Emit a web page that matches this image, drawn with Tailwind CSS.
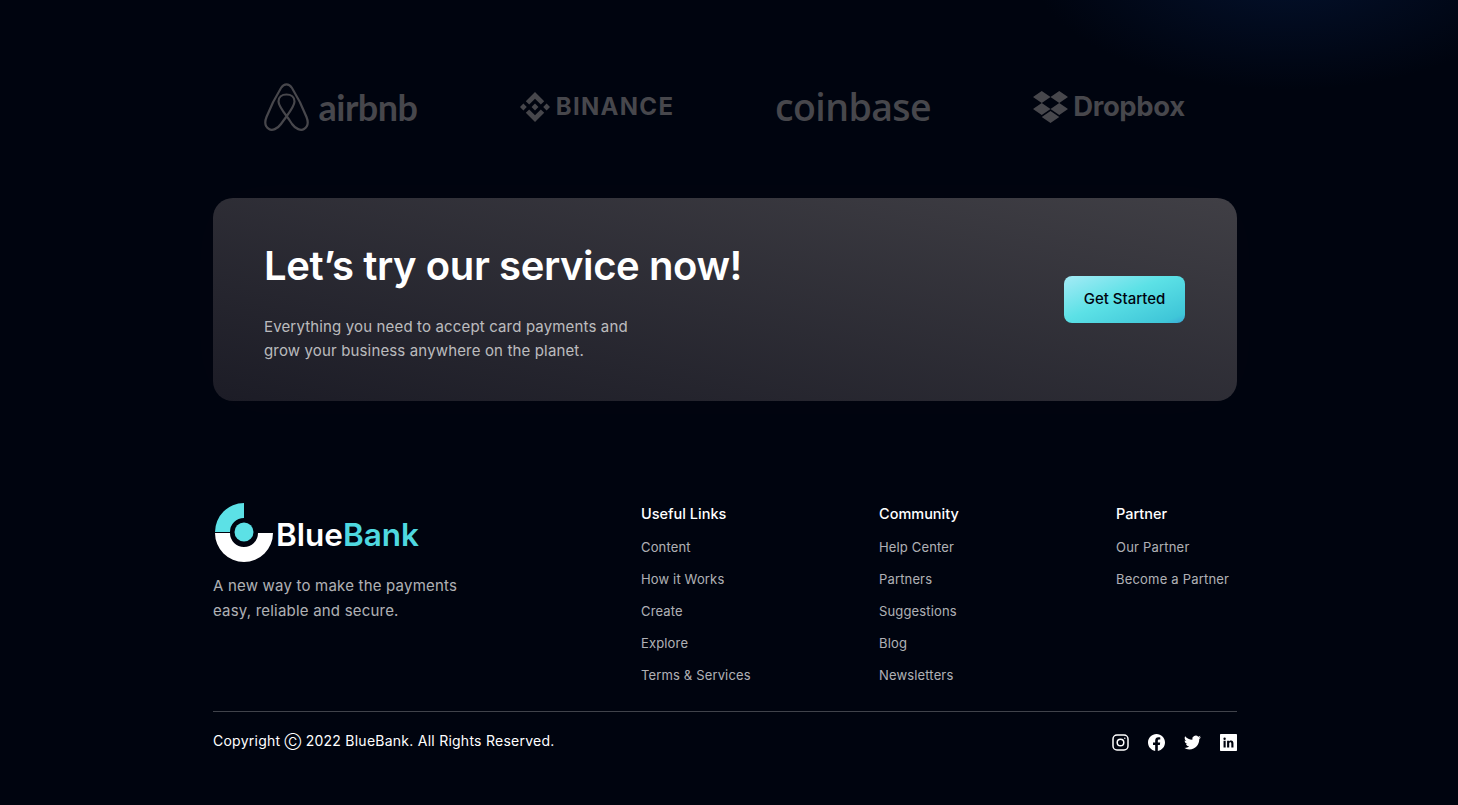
<!DOCTYPE html>
<html>
<head>
<meta charset="utf-8">
<script src="https://cdn.jsdelivr.net/npm/@tailwindcss/browser@4"></script>
</head>
<body class="bg-[#00040f] font-['Inter','Liberation_Sans',sans-serif] text-white">
<div class="relative w-[1458px] h-[805px] overflow-hidden bg-[#00040f]">
  <div class="absolute -top-[170px] right-[-90px] w-[520px] h-[260px] rounded-full bg-[radial-gradient(closest-side,#04122e,transparent)]"></div>
  <main class="relative w-[1024px] ml-[213px]">
    <section class="grid grid-cols-4 h-[198px] items-center pt-[16px] text-[#47474c]">
      <div class="flex justify-center items-center gap-[9px]">
        <svg class="w-[45px] h-[49px]" viewBox="0 0 45 49" fill="none" stroke="#47474c" stroke-width="2.2" stroke-linejoin="round"><path d="M22.5 33C18 27 14.5 22 14.5 18.5C14.5 14 18 11.5 22.5 11.5C27 11.5 30.5 14 30.5 18.5C30.5 24 24 31 17 41C13.500 46 8 48 5 46C1 43.500 0.500 39 2.500 34C6 25 12 13 17 5C19 2 21 1.300 22.500 1.300C24 1.300 26 2 28 5C33 13 39 25 42.500 34C44.500 39 44 43.500 40 46C37 48 31.500 46 28 41C26 38 24.500 35.500 22.500 33Z"/></svg>
        <span class="font-['Lato'] font-bold text-[36px] leading-none tracking-[-0.5px]">airbnb</span>
      </div>
      <div class="flex justify-center items-center gap-[6px]">
        <svg class="w-[30px] h-[30px]" viewBox="0 0 126.61 126.61" fill="#47474c"><path d="M38.73 53.2l24.59-24.58 24.6 24.6 14.3-14.31L63.32 0 24.43 38.9zM0 63.31l14.3-14.31 14.31 14.31-14.31 14.3zM38.73 73.41l24.59 24.59 24.6-24.6 14.31 14.29-38.9 38.91-38.91-38.88zM98 63.31l14.3-14.3 14.31 14.3-14.31 14.31zM77.83 63.3L63.32 48.78 52.59 59.51l-1.24 1.23-2.54 2.54 14.51 14.52 14.51-14.5z"/></svg>
        <span class="font-['Inter'] font-bold text-[24px] leading-none tracking-[1.3px]">BINANCE</span>
      </div>
      <div class="flex justify-center items-center">
        <span class="font-['Open_Sans'] font-semibold text-[37.500px] leading-none tracking-[-0.6px]">coinbase</span>
      </div>
      <div class="flex justify-center items-center gap-[5px]">
        <svg class="w-[35px] h-[32px]" viewBox="0 1.800 24 20.400" preserveAspectRatio="none" fill="#47474c"><path d="M6 1.807L0 5.629l6 3.822 6.001-3.822L6 1.807zM18 1.807l-6 3.822 6 3.822 6-3.822-6-3.822zM0 13.274l6 3.822 6.001-3.822L6 9.452l-6 3.822zM18 9.452l-6 3.822 6 3.822 6-3.822-6-3.822zM6 18.371l6.001 3.822 6-3.822-6-3.822L6 18.371z"/></svg>
        <span class="font-['Inter'] font-bold text-[27.500px] leading-none tracking-[-0.4px]">Dropbox</span>
      </div>
    </section>

    <section class="h-[203px] rounded-[20px] bg-gradient-to-tr from-[#1c1c26] to-[#403f45] pl-[51px] pr-[52px] flex items-center justify-between shadow-[0_0_60px_rgba(255,255,255,0.012)]">
      <div class="pt-[10px]">
        <h2 class="font-semibold text-[40px] leading-[46px] tracking-[-0.4px] -mt-[4px]">Let’s try our service now!</h2>
        <p class="mt-[26px] text-[15px] leading-[24px] tracking-[0.15px] text-white/70 w-[420px]">Everything you need to accept card payments and<br>grow your business anywhere on the planet.</p>
      </div>
      <button class="w-[121px] h-[47px] rounded-[8px] bg-[linear-gradient(157deg,#a5ebf6_0%,#5ce1e6_45%,#3fc6d8_90%,#3aa8d8_100%)] text-[#00040f] font-medium text-[15px]">Get Started</button>
    </section>

    <footer class="pt-[101px]">
      <div class="flex h-[210px] border-b border-white/25">
        <div class="w-[428px]">
          <div class="flex items-center gap-[2px] h-[60px]">
            <svg class="w-[60px] h-[60px] ml-[1px]" viewBox="0 0 60 60">
              <path d="M30 1A29 29 0 0 0 1 30H16A14 14 0 0 1 30 16Z" fill="#5ce1e6"/>
              <path d="M1 30A29 29 0 0 0 59 30H44A14 14 0 0 1 16 30Z" fill="#fff" transform="translate(0 1)"/>
              <circle cx="30" cy="30" r="9.500" fill="#5ce1e6"/>
            </svg>
            <span class="pt-[6px] font-semibold text-[31.500px] leading-none">Blue<span class="text-[#4fd8e0]">Bank</span></span>
          </div>
          <p class="mt-[11px] text-[15px] leading-[25px] tracking-[0.2px] text-white/70">A new way to make the payments<br>easy, reliable and secure.</p>
        </div>
        <div class="w-[238px]">
          <h4 class="font-medium text-[14.500px] leading-[24px]">Useful Links</h4>
          <ul class="mt-[11px] text-[13px] tracking-[0.15px] text-white/70 leading-[20px] space-y-[12px]"><li>Content</li><li>How it Works</li><li>Create</li><li>Explore</li><li>Terms &amp; Services</li></ul>
        </div>
        <div class="w-[237px]">
          <h4 class="font-medium text-[14.500px] leading-[24px]">Community</h4>
          <ul class="mt-[11px] text-[13px] tracking-[0.15px] text-white/70 leading-[20px] space-y-[12px]"><li>Help Center</li><li>Partners</li><li>Suggestions</li><li>Blog</li><li>Newsletters</li></ul>
        </div>
        <div class="flex-1">
          <h4 class="font-medium text-[14.500px] leading-[24px]">Partner</h4>
          <ul class="mt-[11px] text-[13px] tracking-[0.2px] text-white/70 leading-[20px] space-y-[12px]"><li>Our Partner</li><li>Become a Partner</li></ul>
        </div>
      </div>
      <div class="flex items-center justify-between h-[56px]">
        <p class="text-[14px] tracking-[0.25px]">Copyright <span class="text-[12px]">Ⓒ</span> 2022 BlueBank. All Rights Reserved.</p>
        <div class="flex items-center gap-[19px] mt-[4px]">
          <svg class="w-[17px] h-[17px]" viewBox="0 0 17 17" fill="none" stroke="#fff" stroke-width="1.500"><rect x="1" y="1" width="15" height="15" rx="4"/><circle cx="8.500" cy="8.500" r="3.300"/><circle cx="12.800" cy="4.200" r="0.700" fill="#fff" stroke="none"/></svg>
          <svg class="w-[17px] h-[17px]" viewBox="0 0 24 24" fill="#fff"><path d="M24 12.070C24 5.400 18.630 0 12 0S0 5.400 0 12.070C0 18.100 4.390 23.100 10.130 24v-8.440H7.080v-3.490h3.050V9.410c0-3.020 1.790-4.690 4.530-4.690 1.310 0 2.680.24 2.680.24v2.970h-1.510c-1.490 0-1.960.93-1.960 1.890v2.250h3.330l-.53 3.490h-2.800V24C19.610 23.100 24 18.100 24 12.070z"/></svg>
          <svg class="w-[17px] h-[17px]" viewBox="0 0 24 24" fill="#fff"><path d="M23.950 4.570a10 10 0 0 1-2.820.77 4.960 4.960 0 0 0 2.160-2.720c-.95.550-2 .96-3.130 1.190a4.920 4.920 0 0 0-8.380 4.480C7.690 8.090 4.070 6.130 1.640 3.160a4.820 4.820 0 0 0-.67 2.480c0 1.710.87 3.210 2.190 4.100a4.900 4.900 0 0 1-2.230-.62v.06a4.920 4.920 0 0 0 3.950 4.830 5 5 0 0 1-2.210.08 4.940 4.940 0 0 0 4.600 3.420A9.870 9.870 0 0 1 0 19.540a13.940 13.940 0 0 0 7.550 2.210c9.050 0 14-7.500 14-13.980 0-.21 0-.42-.02-.63a9.940 9.940 0 0 0 2.460-2.550z"/></svg>
          <svg class="w-[17px] h-[17px]" viewBox="0 0 24 24" fill="#fff"><path fill-rule="evenodd" d="M1 0H23C23.600 0 24 .4 24 1V23C24 23.600 23.600 24 23 24H1C.4 24 0 23.600 0 23V1C0 .4 .4 0 1 0ZM5 9.500V19H8V9.500ZM6.500 5A1.700 1.700 0 1 0 6.500 8.400 1.700 1.700 0 1 0 6.500 5ZM10 9.500V19H13V14C13 12.500 13.500 11.800 14.600 11.800 15.700 11.800 16 12.600 16 14V19H19V13.500C19 10.700 17.800 9.200 15.600 9.200 14.300 9.200 13.400 9.800 13 10.700V9.500Z"/></svg>
        </div>
      </div>
    </footer>
  </main>
</div>
</body>
</html>
